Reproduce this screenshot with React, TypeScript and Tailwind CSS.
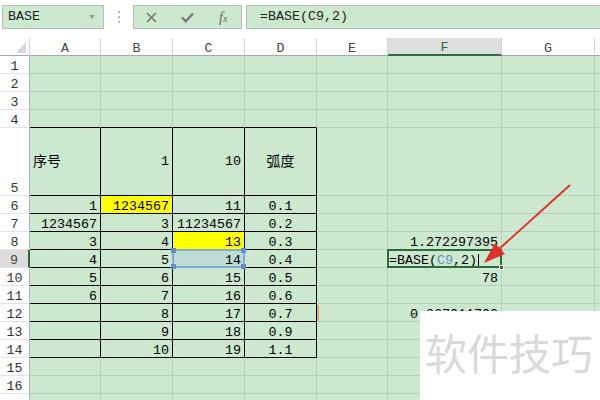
import React from "react";

const GRID = "grid grid-cols-[30px_71px_72px_72px_72px_71px_114px_93px_1fr]";
const COLS = ["A", "B", "C", "D", "E", "F", "G"];
const ROWS = Array.from({ length: 17 }, (_, i) => i + 1);

type CellDef = { v: React.ReactNode; a?: "l" | "c" | "r"; yellow?: boolean; cn?: boolean };

const DATA: Record<string, CellDef> = {
  A5: { v: "序号", a: "l", cn: true },
  B5: { v: "1" },
  C5: { v: "10" },
  D5: { v: "弧度", a: "c", cn: true },
  A6: { v: "1" },
  B6: { v: "1234567", yellow: true },
  C6: { v: "11" },
  D6: { v: "0.1", a: "c" },
  A7: { v: "1234567" },
  B7: { v: "3" },
  C7: { v: "11234567" },
  D7: { v: "0.2", a: "c" },
  A8: { v: "3" },
  B8: { v: "4" },
  C8: { v: "13", yellow: true },
  D8: { v: "0.3", a: "c" },
  A9: { v: "4" },
  B9: { v: "5" },
  C9: { v: "14" },
  D9: { v: "0.4", a: "c" },
  A10: { v: "5" },
  B10: { v: "6" },
  C10: { v: "15" },
  D10: { v: "0.5", a: "c" },
  A11: { v: "6" },
  B11: { v: "7" },
  C11: { v: "16" },
  D11: { v: "0.6", a: "c" },
  B12: { v: "8" },
  C12: { v: "17" },
  D12: { v: "0.7", a: "c" },
  B13: { v: "9" },
  C13: { v: "18" },
  D13: { v: "0.9", a: "c" },
  B14: { v: "10" },
  C14: { v: "19" },
  D14: { v: "1.1", a: "c" },
  F8: { v: "1.272297395" },
  F10: { v: "78" },
  F12: { v: "0.367011703" },
};

function Toolbar() {
  return (
    <div className="flex h-[38px] items-start bg-white pt-[5px] text-[#222]">
      <div className="ml-[2px] flex h-[24px] w-[102px] items-center justify-between border border-[#b1c4b2] bg-[#cce8cf] pl-[5px] pr-[8px]">
        <span>BASE</span>
        <span className="h-0 w-0 border-x-[3px] border-t-[4px] border-x-transparent border-t-[#9a9a9a]" />
      </div>
      <div className="flex h-[24px] w-[29px] flex-col items-center justify-center gap-[3px]">
        <span className="h-[2px] w-[2px] bg-[#b8b8b8]" />
        <span className="h-[2px] w-[2px] bg-[#b8b8b8]" />
        <span className="h-[2px] w-[2px] bg-[#b8b8b8]" />
      </div>
      <div className="grid h-[24px] w-[109px] grid-cols-3 items-center justify-items-center border border-[#b1c4b2] bg-[#cce8cf]">
        <svg width="11" height="11" viewBox="0 0 11 11">
          <path d="M1 1 L10 10 M10 1 L1 10" stroke="#777" strokeWidth="1.7" />
        </svg>
        <svg width="13" height="11" viewBox="0 0 13 11">
          <path d="M1 5.5 L4.8 9.3 L12 1.5" stroke="#777" strokeWidth="2.3" fill="none" />
        </svg>
        <span className="font-['Liberation_Serif',serif] text-[14px] italic text-[#666]">
          f<span className="text-[10px]">x</span>
        </span>
      </div>
      <div className="ml-[4px] flex h-[24px] flex-1 items-center border border-r-0 border-[#b1c4b2] bg-[#cce8cf] pl-[13px]">
        =BASE(C9,2)
      </div>
    </div>
  );
}

function ColumnHeader() {
  return (
    <div className={`${GRID} h-[18px]`}>
      <div className="relative border-r border-b border-r-[#d4d4d4] border-b-[#a8a8a8] bg-white">
        <svg className="absolute bottom-[2px] right-[3px]" width="10" height="11" viewBox="0 0 10 11">
          <path d="M10 0 L10 11 L0 11 Z" fill="#d8d8d8" />
        </svg>
      </div>
      {COLS.map((c) =>
        c === "F" ? (
          <div
            key={c}
            className="flex items-end justify-center border-r border-b-2 border-r-[#d4d4d4] border-b-[#2d6b40] bg-[#dedede] leading-[12px] text-[#2d6b40]"
          >
            {c}
          </div>
        ) : (
          <div
            key={c}
            className="flex items-end justify-center border-r border-b border-r-[#d4d4d4] border-b-[#a8a8a8] bg-white leading-[12px] text-[#444]"
          >
            {c}
          </div>
        ),
      )}
      <div className="border-b border-b-[#a8a8a8] bg-white" />
    </div>
  );
}

function Handle({ pos }: { pos: string }) {
  return <span className={`absolute h-[5px] w-[5px] bg-[#5d8fd3] ${pos}`} />;
}

function GridCell({ r, c, i }: { r: number; c: string; i: number }) {
  const id = `${c}${r}`;
  const d = DATA[id];
  const tableRight = i <= 3 && r >= 5 && r <= 14;
  const tableBottom = i <= 3 && r >= 4 && r <= 14;
  const align = d?.a === "l" ? "justify-start" : d?.a === "c" ? "justify-center" : "justify-end";
  const bg = d?.yellow ? "bg-[#ffff00]" : id === "C9" ? "bg-[#bddcd3]" : "bg-[#cce8cf]";

  if (id === "F9") {
    return (
      <div className="relative flex items-end whitespace-nowrap border-r border-b border-r-[#b6d1b9] border-b-[#b6d1b9] bg-[#cce8cf] pl-[1px] leading-[12px]">
        <div className="absolute -inset-[1px] z-10 border-2 border-[#2d6b40]" />
        <span>
          =BASE(<span className="text-[#5f8fd0]">C9</span>,2)
        </span>
        <span className="mb-[-1px] ml-[1px] h-[14px] w-px bg-black" />
        <span className="absolute -bottom-[3px] -right-[3px] z-20 h-[5px] w-[5px] border border-white bg-[#2d6b40]" />
      </div>
    );
  }

  return (
    <div
      className={`relative flex whitespace-nowrap border-r border-b px-[3px] leading-[12px] ${
        r === 5 ? "items-center" : "items-end"
      } ${align} ${bg} ${tableRight ? "border-r-black" : "border-r-[#b6d1b9]"} ${
        tableBottom ? "border-b-black" : "border-b-[#b6d1b9]"
      }`}
    >
      {d ? <span className={d.cn ? "text-[14px]" : ""}>{d.v}</span> : null}
      {id === "C9" ? (
        <div className="absolute -inset-[1px] z-10 border-2 border-[#86a9dc]">
          <Handle pos="-left-[3px] -top-[3px]" />
          <Handle pos="-right-[3px] -top-[3px]" />
          <Handle pos="-left-[3px] -bottom-[3px]" />
          <Handle pos="-right-[3px] -bottom-[3px]" />
        </div>
      ) : null}
      {id === "E12" ? <span className="absolute bottom-0 left-0 top-[1px] w-[2px] bg-[#f2a06e]" /> : null}
    </div>
  );
}

function Row({ r }: { r: number }) {
  const selected = r === 9;
  return (
    <div className={`${GRID} ${r === 5 ? "h-[68px]" : "h-[18px]"}`}>
      <div
        className={`flex items-end justify-center border-b border-b-[#e3e3e3] leading-[12px] ${
          selected
            ? "border-r-2 border-r-[#2d6b40] bg-[#dcdcdc] text-[#444]"
            : "border-r border-r-[#b4b4b4] bg-white text-[#333]"
        }`}
      >
        {r <= 16 ? r : null}
      </div>
      {COLS.map((c, i) => (
        <GridCell key={c} r={r} c={c} i={i} />
      ))}
      <div className="border-b border-b-[#b6d1b9] bg-[#cce8cf]" />
    </div>
  );
}

export default function App() {
  return (
    <div className="relative h-[400px] w-[600px] overflow-hidden bg-white font-['Liberation_Mono','Noto_Sans_CJK_SC',monospace] text-[13.33px] text-black">
      <Toolbar />
      <ColumnHeader />
      {ROWS.map((r) => (
        <Row key={r} r={r} />
      ))}

      {/* watermark */}
      <div className="absolute bottom-0 left-[420px] right-0 top-[311px] z-30 bg-white pl-[5px] pt-[20px]">
        <span className="font-['Noto_Sans_CJK_SC',sans-serif] text-[42px] leading-none text-[#d9d9d9]">软件技巧</span>
      </div>

      {/* annotation arrow */}
      <svg className="pointer-events-none absolute inset-0 z-40" width="600" height="400" viewBox="0 0 600 400">
        <line x1="570" y1="185" x2="498" y2="250" stroke="#e0302c" strokeWidth="2" />
        <polygon points="484,263 495,243 505,254" fill="#e0302c" />
      </svg>
    </div>
  );
}
